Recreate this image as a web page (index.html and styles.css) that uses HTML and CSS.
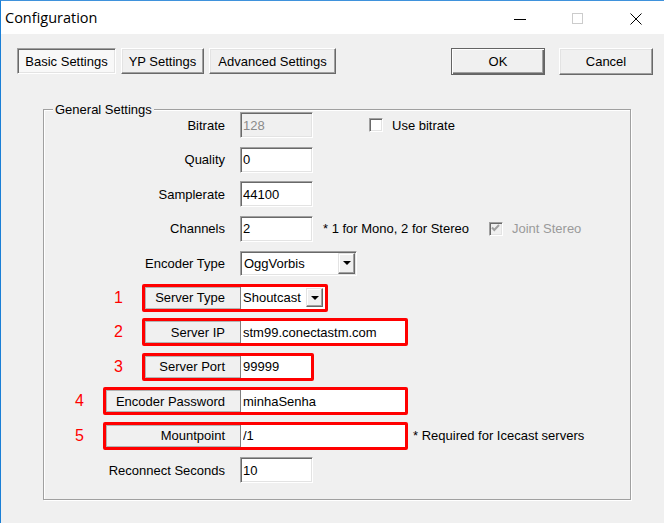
FILE: index.html
```html
<!DOCTYPE html>
<html lang="en">
<head>
  <meta charset="UTF-8">
  <title>Configuration</title>
  <link rel="stylesheet" href="styles.css">
</head>
<body>

  <div class="window">
    <div class="titlebar">
      <span class="title">Configuration</span>
      <div class="tb-buttons">
        <span class="tb-btn">
          <svg width="12" height="12" viewBox="0 0 12 12"><path d="M0 6.5H12" stroke="#000" stroke-width="1"/></svg>
        </span>
        <span class="tb-btn">
          <svg width="12" height="12" viewBox="0 0 12 12"><rect x="0.5" y="0.5" width="10" height="10" fill="none" stroke="#cccccc"/></svg>
        </span>
        <span class="tb-btn tb-close">
          <svg width="12" height="12" viewBox="0 0 12 12"><path d="M0.5 0.5L11.5 11.5M11.5 0.5L0.5 11.5" stroke="#000" stroke-width="1"/></svg>
        </span>
      </div>
    </div>

    <div class="content">
      <div class="toolbar">
        <div class="tabs">
          <button class="btn btn-pressed tab-basic">Basic Settings</button>
          <button class="btn tab-yp">YP Settings</button>
          <button class="btn tab-adv">Advanced Settings</button>
        </div>
        <div class="actions">
          <button class="btn btn-default btn-wide">OK</button>
          <button class="btn btn-wide">Cancel</button>
        </div>
      </div>

      <div class="group">
        <span class="legend">General Settings</span>
        <div class="rows">

          <div class="row">
            <span class="lbl">Bitrate</span>
            <input class="field field-disabled" type="text" value="128" disabled>
            <span class="check check-bitrate"></span>
            <span class="check-text">Use bitrate</span>
          </div>

          <div class="row">
            <span class="lbl">Quality</span>
            <input class="field" type="text" value="0">
          </div>

          <div class="row">
            <span class="lbl">Samplerate</span>
            <input class="field" type="text" value="44100">
          </div>

          <div class="row">
            <span class="lbl">Channels</span>
            <input class="field" type="text" value="2">
            <span class="note">* 1 for Mono, 2 for Stereo</span>
            <span class="check check-disabled check-joint">
              <svg width="11" height="11" viewBox="0 0 11 11"><path d="M2 4.5L4.3 7L9 2" fill="none" stroke="#a0a0a0" stroke-width="2"/></svg>
            </span>
            <span class="check-text text-disabled">Joint Stereo</span>
          </div>

          <div class="row">
            <span class="lbl">Encoder Type</span>
            <div class="combo combo-encoder">
              <span>OggVorbis</span>
              <span class="combo-btn"><span class="arrow"></span></span>
            </div>
          </div>

          <div class="row">
            <span class="num num-short">1</span>
            <div class="mark mark-short">
              <span class="mark-lbl">Server Type</span>
              <div class="mark-combo">
                <span>Shoutcast</span>
                <span class="combo-btn"><span class="arrow"></span></span>
              </div>
            </div>
          </div>

          <div class="row">
            <span class="num num-short">2</span>
            <div class="mark mark-short">
              <span class="mark-lbl">Server IP</span>
              <input class="mark-field field-long" type="text" value="stm99.conectastm.com">
            </div>
          </div>

          <div class="row">
            <span class="num num-short">3</span>
            <div class="mark mark-short">
              <span class="mark-lbl">Server Port</span>
              <input class="mark-field field-port" type="text" value="99999">
            </div>
          </div>

          <div class="row">
            <span class="num num-long">4</span>
            <div class="mark mark-long">
              <span class="mark-lbl">Encoder Password</span>
              <input class="mark-field field-long" type="text" value="minhaSenha">
            </div>
          </div>

          <div class="row">
            <span class="num num-long">5</span>
            <div class="mark mark-long">
              <span class="mark-lbl">Mountpoint</span>
              <input class="mark-field field-long" type="text" value="/1">
            </div>
            <span class="note note-mount">* Required for Icecast servers</span>
          </div>

          <div class="row">
            <span class="lbl">Reconnect Seconds</span>
            <input class="field" type="text" value="10">
          </div>

        </div>
      </div>
    </div>
  </div>

</body>
</html>
```

FILE: styles.css
```css
body {
  margin: 0;
  background: #fff;
  font-family: "Liberation Sans", Arial, sans-serif;
  font-size: 13px;
  color: #000;
}

.window {
  width: 664px;
  height: 523px;
  box-sizing: border-box;
  border-top: 1px solid #3f92dc;
  border-left: 1px solid #1a7fd6;
  background: #f0f0f0;
  box-shadow: 0 1px 3px rgba(0, 0, 0, 0.35);
  display: flex;
  flex-direction: column;
}

/* title bar */
.titlebar {
  height: 33px;
  background: #fff;
  display: flex;
  align-items: center;
}

.title {
  font-family: "Open Sans", "Noto Sans", sans-serif;
  font-size: 14.5px;
  padding-left: 4px;
}

.tb-buttons {
  margin-left: auto;
  display: flex;
  height: 100%;
}

.tb-btn {
  width: 58px;
  display: flex;
  align-items: center;
  justify-content: center;
  padding-top: 2px;
}

.tb-close {
  width: 57px;
}

/* body */
.content {
  flex: 1;
  padding: 14px 11px 0 16px;
}

.toolbar {
  display: flex;
  justify-content: space-between;
}

.tabs, .actions {
  display: flex;
  gap: 5px;
}

.actions {
  gap: 14px;
}

.btn {
  height: 26px;
  box-sizing: border-box;
  padding: 0;
  font: inherit;
  color: #000;
  background: #f0f0f0;
  border: 1px solid;
  border-color: #fff #696969 #696969 #fff;
  box-shadow: inset -1px -1px 0 #a0a0a0, inset 1px 1px 0 #e3e3e3;
}

.btn-pressed {
  background: #f8f8f8;
  border-color: #a0a0a0 #fff #fff #a0a0a0;
  box-shadow: inset 1px 1px 0 #696969, inset -1px -1px 0 #e3e3e3;
}

.btn-default {
  border-color: #646464;
  box-shadow: inset 1px 1px 0 #fff, inset -1px -1px 0 #696969, inset -2px -2px 0 #a0a0a0;
}

.tab-basic { width: 99px; }
.tab-yp { width: 83px; }
.tab-adv { width: 127px; }
.btn-wide { width: 94px; height: 27px; }

/* group box */
.group {
  position: relative;
  margin: 34px 0 0 26px;
  width: 588px;
  height: 391px;
  box-sizing: border-box;
  border: 1px solid #a0a0a0;
  box-shadow: 1px 1px 0 #fff, inset 1px 1px 0 #fff;
}

.legend {
  position: absolute;
  top: -8px;
  left: 9px;
  padding: 0 2px;
  line-height: 16px;
  background: #f0f0f0;
}

.rows {
  display: grid;
  grid-auto-rows: 34.5px;
  margin-top: -2px;
}

.row {
  display: flex;
  align-items: center;
}

.lbl {
  width: 196px;
  box-sizing: border-box;
  padding-right: 15px;
  text-align: right;
}

.field {
  width: 73px;
  height: 26px;
  box-sizing: border-box;
  margin: 0;
  padding: 0 0 0 2px;
  font: inherit;
  color: #000;
  background: #fff;
  border: 1px solid;
  border-color: #a0a0a0 #fff #fff #a0a0a0;
  box-shadow: inset 1px 1px 0 #696969, inset -1px -1px 0 #e3e3e3;
  outline: none;
}

.field-disabled {
  background: #f0f0f0;
  color: #8a8a8a;
}

/* combo boxes */
.combo {
  width: 117px;
  height: 25px;
  box-sizing: border-box;
  padding-left: 3px;
  display: flex;
  align-items: center;
  background: #fff;
  border: 1px solid;
  border-color: #a0a0a0 #fff #fff #a0a0a0;
  box-shadow: inset 1px 1px 0 #696969, inset -1px -1px 0 #e3e3e3;
}

.combo-btn {
  margin-left: auto;
  margin-right: 1px;
  width: 17px;
  height: 21px;
  box-sizing: border-box;
  display: flex;
  align-items: center;
  justify-content: center;
  background: #f0f0f0;
  border: 1px solid;
  border-color: #e3e3e3 #696969 #696969 #e3e3e3;
  box-shadow: inset -1px -1px 0 #a0a0a0, inset 1px 1px 0 #fff;
}

.arrow {
  width: 0;
  height: 0;
  border-left: 4px solid transparent;
  border-right: 4px solid transparent;
  border-top: 4px solid #000;
}

/* checkboxes */
.check {
  width: 14px;
  height: 14px;
  box-sizing: border-box;
  display: flex;
  align-items: center;
  justify-content: center;
  background: #fff;
  border: 1px solid;
  border-color: #a0a0a0 #fff #fff #a0a0a0;
  box-shadow: inset 1px 1px 0 #696969, inset -1px -1px 0 #e3e3e3;
}

.check-disabled {
  background: #f0f0f0;
}

.check-bitrate { margin-left: 56px; }
.check-joint { margin-left: 20px; }

.check-text {
  margin-left: 9px;
}

.text-disabled {
  color: #9a9a9a;
}

.note {
  margin-left: 10px;
}

.note-mount {
  margin-left: 5px;
}

/* red annotations */
.num {
  box-sizing: border-box;
  padding-right: 19px;
  text-align: right;
  color: #f00;
  font-size: 16px;
}

.num-short { width: 98px; }
.num-long { width: 59px; }

.mark {
  display: flex;
  height: 28px;
  box-sizing: border-box;
  border: 3px solid #f00;
  border-radius: 2px;
}

.mark-lbl {
  box-sizing: border-box;
  display: flex;
  align-items: center;
  justify-content: flex-end;
  padding-right: 15px;
  border: 1px solid #b4b4b4;
  border-right: none;
}

.mark-short .mark-lbl { width: 95px; }
.mark-long .mark-lbl { width: 134px; }

.mark-field {
  height: 100%;
  box-sizing: border-box;
  margin: 0;
  padding: 0 0 0 2px;
  font: inherit;
  color: #000;
  background: #fff;
  border: none;
  border-left: 1px solid #808080;
  outline: none;
}

.field-long { width: 165px; }
.field-port { width: 71px; }

.mark-combo {
  width: 85px;
  height: 100%;
  box-sizing: border-box;
  padding-left: 2px;
  display: flex;
  align-items: center;
  background: #fff;
  border-left: 1px solid #808080;
}

.mark-combo .combo-btn {
  height: 19px;
  margin-right: 2px;
}
```
